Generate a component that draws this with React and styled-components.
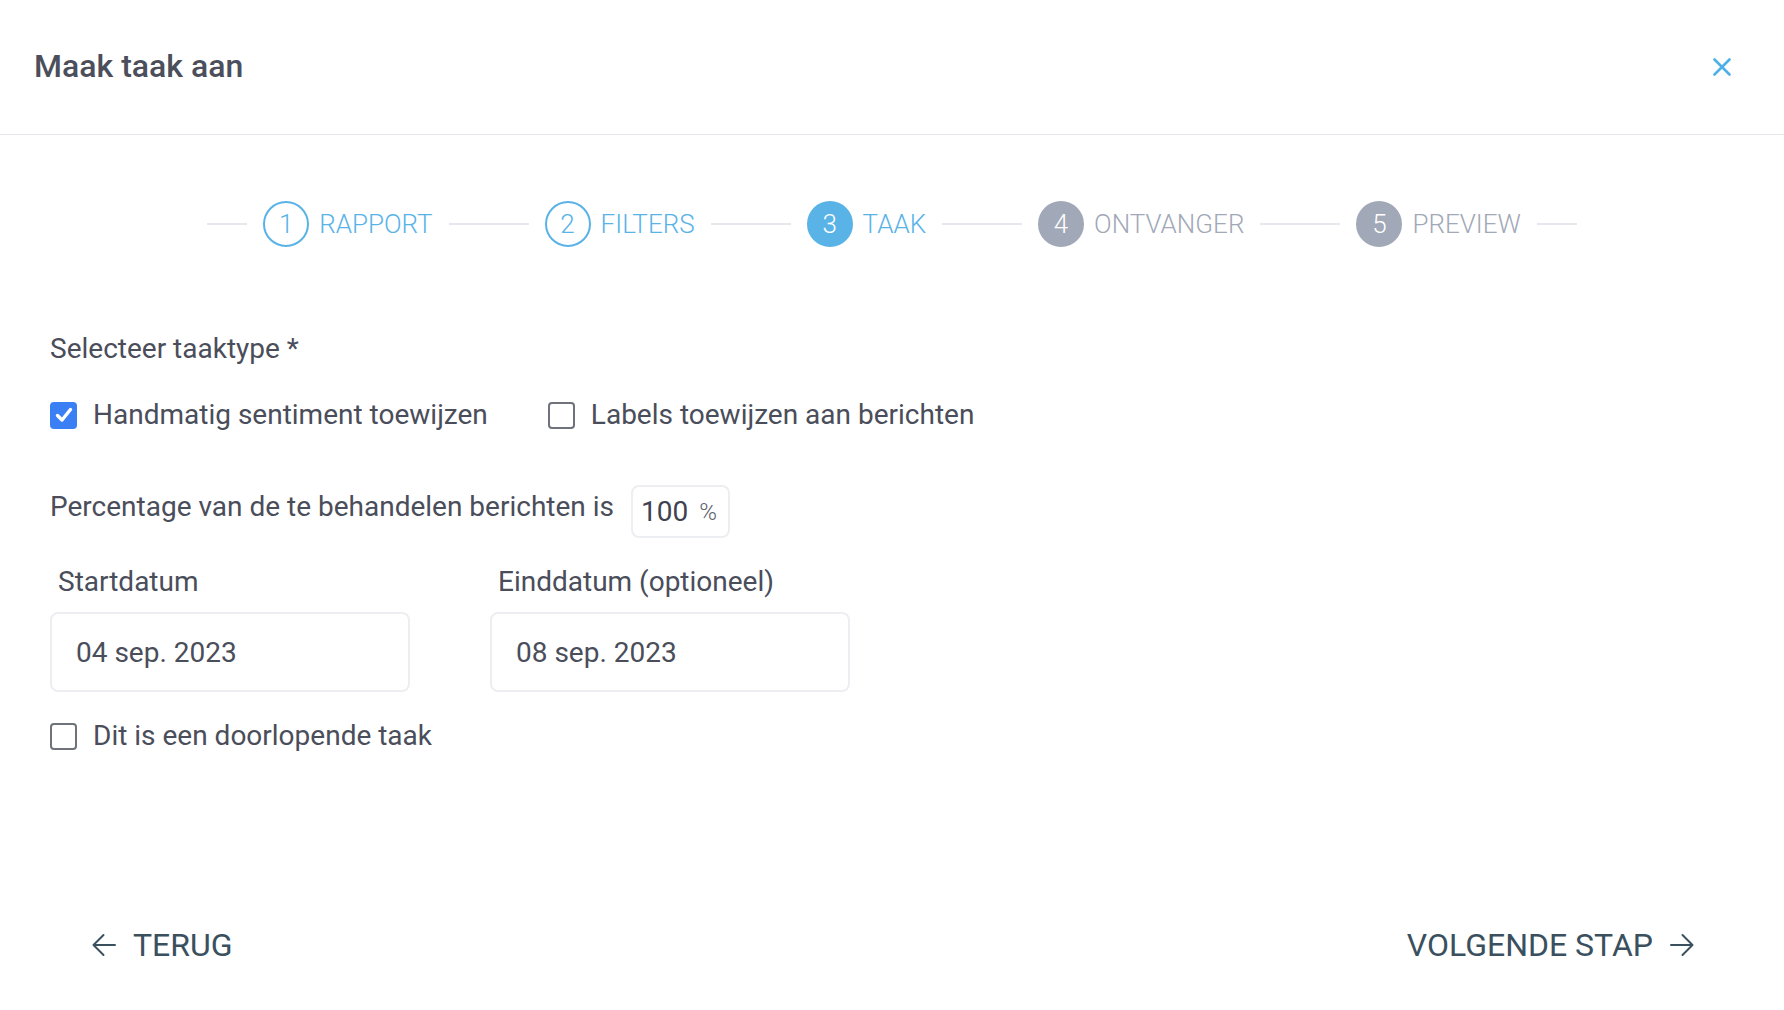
import React from "react";
import styled, { createGlobalStyle } from "styled-components";

const GlobalStyle = createGlobalStyle`
  html, body {
    margin: 0;
    padding: 0;
    background: #ffffff;
    font-family: Roboto, "Liberation Sans", Arial, sans-serif;
  }
  * {
    box-sizing: border-box;
  }
`;

const BLUE = "#59b3e7";
const GREY = "#a1a8b7";
const TEXT = "#4a4d5a";

const Page = styled.div`
  min-height: 100vh;
  display: flex;
  flex-direction: column;
`;

const Header = styled.header`
  height: 135px;
  padding: 0 53px 0 34px;
  display: flex;
  align-items: center;
  justify-content: space-between;
  border-bottom: 1px solid #e6e7ec;
`;

const Title = styled.h1`
  margin: 0 0 2px;
  font-size: 32px;
  font-weight: 500;
  color: #4b4e5b;
`;

const CloseButton = styled.button`
  border: none;
  background: none;
  padding: 0;
  width: 18px;
  height: 18px;
  display: flex;
  cursor: pointer;
`;

const Stepper = styled.nav`
  display: flex;
  align-items: center;
  justify-content: center;
  padding-top: 66px;
`;

const Connector = styled.span`
  display: block;
  width: ${({ $short }) => ($short ? "40px" : "80px")};
  height: 2px;
  background: #e7e8ed;
  margin: 0 16px;
`;

const Step = styled.div`
  display: flex;
  align-items: center;
  gap: 10px;
`;

const StepCircle = styled.span`
  width: 46px;
  height: 46px;
  border-radius: 50%;
  display: flex;
  align-items: center;
  justify-content: center;
  font-size: 26px;
  font-weight: 300;
  border: 2px solid ${({ $state }) => ($state === "todo" ? GREY : BLUE)};
  background: ${({ $state }) =>
    $state === "active" ? BLUE : $state === "todo" ? GREY : "transparent"};
  color: ${({ $state }) => ($state === "done" ? BLUE : "#ffffff")};
`;

const StepLabel = styled.span`
  font-size: 26px;
  font-weight: 300;
  color: ${({ $state }) => ($state === "todo" ? GREY : BLUE)};
`;

const Form = styled.section`
  padding: 86px 50px 0;
  display: flex;
  flex-direction: column;
`;

const Label = styled.div`
  font-size: 28px;
  line-height: 32px;
  color: ${TEXT};
`;

const CheckRow = styled.div`
  display: flex;
  align-items: center;
  gap: 60px;
  margin-top: ${({ $top }) => $top}px;
`;

const CheckItem = styled.label`
  display: flex;
  align-items: center;
  gap: 16px;
  font-size: 28px;
  line-height: 32px;
  color: ${TEXT};
  cursor: pointer;
`;

const Box = styled.span`
  width: 27px;
  height: 27px;
  border-radius: 4px;
  display: flex;
  align-items: center;
  justify-content: center;
  background: ${({ $checked }) => ($checked ? "#3b7ff5" : "#ffffff")};
  border: ${({ $checked }) => ($checked ? "none" : "2px solid #6f717b")};
`;

const PercentRow = styled.div`
  display: flex;
  align-items: center;
  gap: 17px;
  margin-top: 54px;
`;

const PercentText = styled.span`
  font-size: 28px;
  line-height: 32px;
  color: ${TEXT};
  margin-bottom: 10px;
`;

const PercentBox = styled.div`
  width: 99px;
  height: 53px;
  border: 2px solid #eceef2;
  border-radius: 8px;
  display: flex;
  align-items: center;
  padding-left: 8px;
  gap: 11px;
`;

const PercentValue = styled.span`
  font-size: 28px;
  color: #3f4250;
`;

const PercentSign = styled.span`
  font-size: 24px;
  font-weight: 300;
  color: #5d606b;
`;

const DateRow = styled.div`
  display: flex;
  gap: 80px;
  margin-top: 28px;
`;

const DateField = styled.div`
  display: flex;
  flex-direction: column;
  gap: 14px;
`;

const DateLabel = styled.span`
  font-size: 28px;
  line-height: 32px;
  color: ${TEXT};
  padding-left: 8px;
`;

const DateInput = styled.div`
  width: 360px;
  height: 80px;
  border: 2px solid #eceef2;
  border-radius: 8px;
  display: flex;
  align-items: center;
  padding-left: 24px;
  font-size: 28px;
  color: ${TEXT};
`;

const Footer = styled.footer`
  margin-top: auto;
  display: flex;
  justify-content: space-between;
  align-items: center;
  padding: 0 89px 46px 91px;
`;

const NavButton = styled.button`
  border: none;
  background: none;
  padding: 0;
  display: flex;
  align-items: center;
  gap: ${({ $gap }) => $gap}px;
  font-family: inherit;
  font-size: 32px;
  color: #3a505e;
  cursor: pointer;
`;

const CloseIcon = () => (
  <svg width="18" height="18" viewBox="0 0 18 18">
    <path d="M1.5 1.5 L16.5 16.5 M16.5 1.5 L1.5 16.5" stroke="#4fb0e8" strokeWidth="2.6" strokeLinecap="round" />
  </svg>
);

const Check = () => (
  <svg width="20" height="20" viewBox="0 0 20 20">
    <path d="M3.5 10.5 L8 15 L16.5 4.5" fill="none" stroke="#ffffff" strokeWidth="3.4" strokeLinecap="round" strokeLinejoin="round" />
  </svg>
);

const Arrow = ({ dir }) => (
  <svg width="26" height="26" viewBox="0 0 26 26">
    {dir === "left" ? (
      <path d="M24 13 H2.5 M12.5 3 L2.5 13 L12.5 23" fill="none" stroke="#3a505e" strokeWidth="2" strokeLinecap="round" strokeLinejoin="round" />
    ) : (
      <path d="M2 13 H23.5 M13.5 3 L23.5 13 L13.5 23" fill="none" stroke="#3a505e" strokeWidth="2" strokeLinecap="round" strokeLinejoin="round" />
    )}
  </svg>
);

const steps = [
  { n: 1, label: "RAPPORT", state: "done" },
  { n: 2, label: "FILTERS", state: "done" },
  { n: 3, label: "TAAK", state: "active" },
  { n: 4, label: "ONTVANGER", state: "todo" },
  { n: 5, label: "PREVIEW", state: "todo" },
];

const CheckBox = ({ checked, children }) => (
  <CheckItem>
    <Box $checked={checked}>{checked && <Check />}</Box>
    {children}
  </CheckItem>
);

const App = () => {
  return (
    <Page>
      <GlobalStyle />
      <Header>
        <Title>Maak taak aan</Title>
        <CloseButton aria-label="Sluiten">
          <CloseIcon />
        </CloseButton>
      </Header>

      <Stepper>
        <Connector $short />
        {steps.map((s, i) => (
          <React.Fragment key={s.n}>
            <Step>
              <StepCircle $state={s.state}>{s.n}</StepCircle>
              <StepLabel $state={s.state}>{s.label}</StepLabel>
            </Step>
            <Connector $short={i === steps.length - 1} />
          </React.Fragment>
        ))}
      </Stepper>

      <Form>
        <Label>Selecteer taaktype *</Label>
        <CheckRow $top={34}>
          <CheckBox checked>Handmatig sentiment toewijzen</CheckBox>
          <CheckBox>Labels toewijzen aan berichten</CheckBox>
        </CheckRow>

        <PercentRow>
          <PercentText>Percentage van de te behandelen berichten is</PercentText>
          <PercentBox>
            <PercentValue>100</PercentValue>
            <PercentSign>%</PercentSign>
          </PercentBox>
        </PercentRow>

        <DateRow>
          <DateField>
            <DateLabel>Startdatum</DateLabel>
            <DateInput>04 sep. 2023</DateInput>
          </DateField>
          <DateField>
            <DateLabel>Einddatum (optioneel)</DateLabel>
            <DateInput>08 sep. 2023</DateInput>
          </DateField>
        </DateRow>

        <CheckRow $top={28}>
          <CheckBox>Dit is een doorlopende taak</CheckBox>
        </CheckRow>
      </Form>

      <Footer>
        <NavButton $gap={16}>
          <Arrow dir="left" />
          TERUG
        </NavButton>
        <NavButton $gap={16}>
          VOLGENDE STAP
          <Arrow dir="right" />
        </NavButton>
      </Footer>
    </Page>
  );
};

export default App;
